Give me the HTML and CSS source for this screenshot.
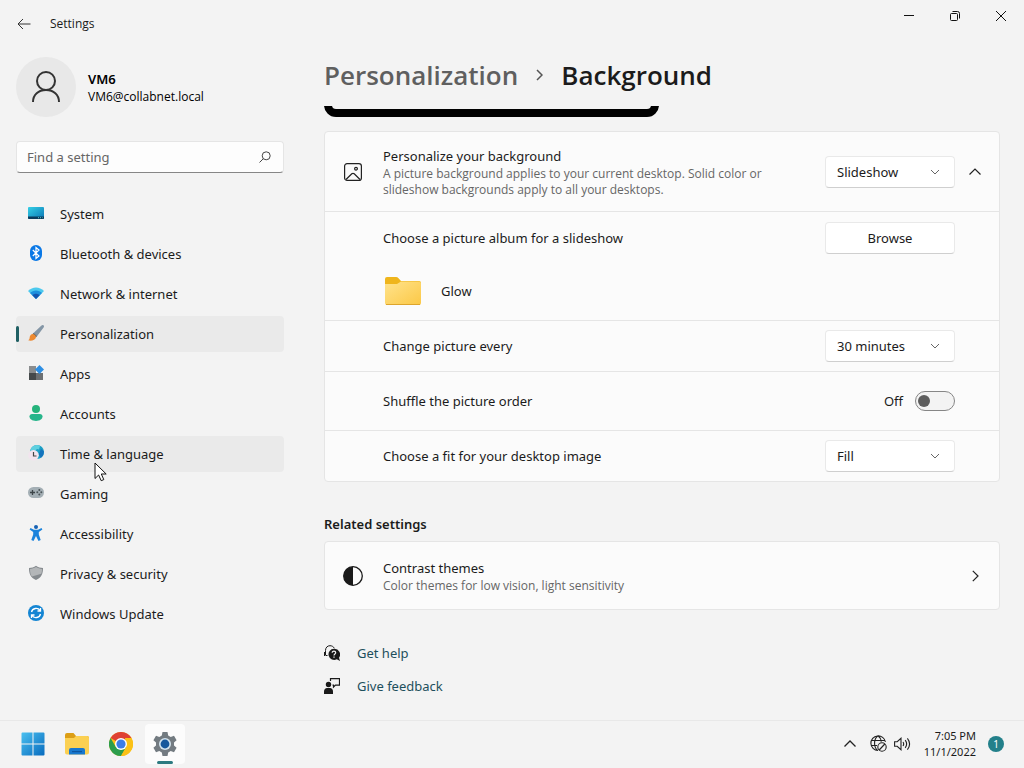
FILE: index.html
```html
<!DOCTYPE html>
<html lang="en">
<head>
  <meta charset="UTF-8">
  <meta name="viewport" content="width=device-width, initial-scale=1.0">
  <title>Settings</title>
  <link rel="stylesheet" href="styles.css">
</head>
<body>

  <header class="titlebar">
    <button class="back-btn" aria-label="Back">
      <svg width="14" height="12" viewBox="0 0 14 12" fill="none" stroke="#333"><path d="M13.500 6H1M6 1L1 6l5 5"/></svg>
    </button>
    <span class="window-title">Settings</span>
    <div class="window-controls">
      <button aria-label="Minimize"><svg width="10" height="10" fill="none" stroke="#111"><path d="M0 4.500h10"/></svg></button>
      <button aria-label="Restore"><svg width="10" height="10" fill="none" stroke="#111"><rect x=".5" y="2.500" width="7" height="7" rx="1"/><path d="M2.500 .5H7.500a2 2 0 0 1 2 2V7.500"/></svg></button>
      <button aria-label="Close"><svg width="10" height="10" fill="none" stroke="#111"><path d="M0 0l10 10M10 0L0 10"/></svg></button>
    </div>
  </header>

  <div class="layout">
    <aside class="sidebar">
      <div class="profile">
        <div class="avatar">
          <svg width="28" height="32" viewBox="0 0 28 32" fill="none" stroke="#333" stroke-width="2"><circle cx="14" cy="10" r="9"/><path d="M1 31c0-7.500 5.500-12 13-12s13 4.500 13 12"/></svg>
        </div>
        <div>
          <div class="profile-name">VM6</div>
          <div class="profile-mail">VM6@collabnet.local</div>
        </div>
      </div>

      <div class="search-box">
        <input type="text" id="search" placeholder="Find a setting" aria-label="Find a setting">
        <svg width="12" height="12" viewBox="0 0 12 12" fill="none" stroke="#444"><circle cx="7.200" cy="4.800" r="4"/><path d="M4.300 7.700L.5 11.500"/></svg>
      </div>

      <nav class="nav">
        <a href="#" class="nav-item">
          <svg width="16" height="16" viewBox="0 0 16 16"><defs><linearGradient id="sys" x2="1" y2="1"><stop stop-color="#35d0e6"/><stop offset="1" stop-color="#0a75b5"/></linearGradient></defs><rect y="2" width="16" height="12" rx="1" fill="url(#sys)"/><path d="M0 11.500h16V13a1 1 0 0 1-1 1H1a1 1 0 0 1-1-1z" fill="#0b3a5c"/><path d="M10 12.700h1m1 0h1m1 0h.6" stroke="#5cc"/></svg>
          System
        </a>
        <a href="#" class="nav-item">
          <svg width="16" height="16" viewBox="0 0 16 16"><rect x="2" width="12" height="16" rx="6" fill="#0a78e6"/><path d="M4.800 5l6.200 6L8 13.500v-11L11 5l-6.200 6" fill="none" stroke="#fff" stroke-width="1.200"/></svg>
          Bluetooth &amp; devices
        </a>
        <a href="#" class="nav-item">
          <svg width="16" height="16" viewBox="0 0 16 16"><path d="M0 6c4.400-4.700 11.600-4.700 16 0L8 14z" fill="#4cc9ee"/><path d="M2 8c3.200-3.500 8.800-3.500 12 0l-6 6z" fill="#1e90dd"/><path d="M4.400 10.300c2-2 5.200-2 7.200 0L8 14z" fill="#1455ae"/></svg>
          Network &amp; internet
        </a>
        <a href="#" class="nav-item active">
          <svg width="16" height="16" viewBox="0 0 16 16"><path d="M15.600.4c.8.8.3 1.600-.2 2.400L9.200 11 5.800 7.800l7.400-7c.8-.6 1.700-1 2.400-.4z" fill="#8496a6"/><path d="M5.800 7.800L9.200 11l-1.400 1.500-3.400-3.300z" fill="#5b6268"/><path d="M4.600 8.900c1.600-.2 3.600 1.600 3.300 3.300C7.500 15 3.500 16.300.2 15.300c1.800-1 1.200-2.300 1.700-4C2.400 9.900 3.300 9 4.600 8.900z" fill="#ed8a32"/></svg>
          Personalization
        </a>
        <a href="#" class="nav-item">
          <svg width="16" height="16" viewBox="0 0 16 16"><path d="M1 1h7v7H1z" fill="#8a8d8f"/><path d="M1 8h7v7H1z" fill="#45494b"/><path d="M8 8h7v7H8z" fill="#6c7073"/><path d="M11.500 0L16 4.500 11.500 9 7 4.500z" fill="#2d8fe4"/></svg>
          Apps
        </a>
        <a href="#" class="nav-item">
          <svg width="16" height="16" viewBox="0 0 16 16"><circle cx="8" cy="4" r="4" fill="#25b37b"/><path d="M4 9h8c1.500 0 2.500 1 2.500 2.300C14.500 14 12 16 8 16s-6.500-2-6.500-4.700C1.500 10 2.500 9 4 9z" fill="#27b58b"/></svg>
          Accounts
        </a>
        <a href="#" class="nav-item hover">
          <svg width="16" height="16" viewBox="0 0 16 16"><circle cx="9" cy="7" r="7" fill="#1b9fc4"/><path d="M6 .8C3.500 2 2.500 4 2.500 6l4 .5L9 4l2 .5L12 1C10-.3 8-.2 6 .8z" fill="#5fd0df"/><path d="M13 4l2.800 2c.4 3-1 5.500-3 7l-2-4z" fill="#1573bd"/><circle cx="5.500" cy="10.200" r="5.300" fill="#f2e4ee"/><path d="M5.500 7v4h3" fill="none" stroke="#444" stroke-width="1.200"/></svg>
          Time &amp; language
        </a>
        <a href="#" class="nav-item">
          <svg width="16" height="16" viewBox="0 0 16 16"><rect y="2" width="16" height="11" rx="5.500" fill="#a4afb5"/><path d="M2 7.500h5M4.500 5v5" stroke="#3d4549" stroke-width="1.300"/><g fill="#4b5458"><circle cx="11.300" cy="5" r="1"/><circle cx="11.300" cy="9.500" r="1"/><circle cx="9.300" cy="7.300" r="1"/><circle cx="13.300" cy="7.300" r="1"/></g></svg>
          Gaming
        </a>
        <a href="#" class="nav-item">
          <svg width="16" height="16" viewBox="0 0 16 16"><circle cx="8" cy="2" r="2" fill="#1762b4"/><path d="M2.500 3l3.500 1.800h4L13.500 3l.9 1.500L10.800 7v2.500l1.900 5.500-2.200.9L8 11l-2.500 4.900-2.200-.9 1.900-5.500V7L1.600 4.500z" fill="#1b83dc"/></svg>
          Accessibility
        </a>
        <a href="#" class="nav-item">
          <svg width="16" height="16" viewBox="0 0 16 16"><path d="M8 .8C10 2.300 12.500 3 15 3c0 6-1.500 9.500-7 12C2.500 12.500 1 9 1 3c2.500 0 5-.7 7-2.200z" fill="#858a8e"/><path d="M8 2c1.800 1.200 3.800 1.800 6 2 0 2-.2 3.500-.7 4.700L4 11.600C2.600 9.800 2 7.500 2 4c2.200-.2 4.200-.8 6-2z" fill="#b3b6b8"/></svg>
          Privacy &amp; security
        </a>
        <a href="#" class="nav-item">
          <svg width="16" height="16" viewBox="0 0 16 16"><circle cx="8" cy="8" r="8" fill="#1485d3"/><path d="M3.500 7c.8-4 6.500-4.800 8.500-1.500M12.500 3v3h-3M12.500 9c-.8 4-6.500 4.800-8.500 1.500M3.500 13v-3h3" fill="none" stroke="#fff" stroke-width="1.300"/></svg>
          Windows Update
        </a>
      </nav>
    </aside>

    <main class="content">
      <h1 class="breadcrumb">
        <a href="#">Personalization</a>
        <svg width="7" height="12" viewBox="0 0 7 12" fill="none" stroke="#555" stroke-width="1.500"><path d="M1 1l5 5-5 5"/></svg>
        <span>Background</span>
      </h1>

      <div class="preview"><div class="preview-screen"></div></div>

      <section class="card">
        <div class="row row-head">
          <svg class="row-icon" width="18" height="18" viewBox="0 0 18 18" fill="none" stroke="#222" stroke-width="1.200"><rect x=".6" y=".6" width="16.800" height="16.800" rx="2.500"/><circle cx="12" cy="5.700" r="1.400"/><path d="M2 16.500l5.800-5.700q1.200-1 2.400 0l5.800 5.700"/></svg>
          <div class="row-text">
            <label for="bg-type">Personalize your background</label>
            <p>A picture background applies to your current desktop. Solid color or slideshow backgrounds apply to all your desktops.</p>
          </div>
          <div class="select">
            <select id="bg-type"><option>Picture</option><option>Solid color</option><option selected>Slideshow</option></select>
            <svg width="10" height="6" viewBox="0 0 10 6" fill="none" stroke="#666"><path d="M1 1l4 4 4-4"/></svg>
          </div>
          <button class="expand-btn" aria-label="Collapse">
            <svg width="12" height="7" viewBox="0 0 12 7" fill="none" stroke="#222" stroke-width="1.200"><path d="M.5 6.500L6 1l5.500 5.500"/></svg>
          </button>
        </div>

        <div class="row-album">
          <div class="row">
            <span class="row-text">Choose a picture album for a slideshow</span>
            <button class="btn">Browse</button>
          </div>
          <div class="album">
            <svg width="36" height="28" viewBox="0 0 36 28"><defs><linearGradient id="fold" x2="1" y2="1"><stop stop-color="#ffe38c"/><stop offset="1" stop-color="#fbc846"/></linearGradient></defs><path d="M0 2a2 2 0 0 1 2-2h9q1.500 0 2.500 1.200L16 4h18a2 2 0 0 1 2 2v10H0z" fill="#efb51c"/><path d="M0 7h12l4-2.500h18a2 2 0 0 1 2 2V26a2 2 0 0 1-2 2H2a2 2 0 0 1-2-2z" fill="url(#fold)"/><path d="M1 27.500h34" stroke="#dda52c"/></svg>
            <span>Glow</span>
          </div>
        </div>

        <div class="row">
          <label class="row-text" for="interval">Change picture every</label>
          <div class="select">
            <select id="interval"><option>1 minute</option><option>10 minutes</option><option selected>30 minutes</option><option>1 hour</option></select>
            <svg width="10" height="6" viewBox="0 0 10 6" fill="none" stroke="#666"><path d="M1 1l4 4 4-4"/></svg>
          </div>
        </div>

        <div class="row row-toggle">
          <label class="row-text" for="shuffle">Shuffle the picture order</label>
          <span>Off</span>
          <input type="checkbox" id="shuffle" class="toggle">
        </div>

        <div class="row">
          <label class="row-text" for="fit">Choose a fit for your desktop image</label>
          <div class="select">
            <select id="fit"><option selected>Fill</option><option>Fit</option><option>Stretch</option><option>Tile</option><option>Center</option></select>
            <svg width="10" height="6" viewBox="0 0 10 6" fill="none" stroke="#666"><path d="M1 1l4 4 4-4"/></svg>
          </div>
        </div>
      </section>

      <h2>Related settings</h2>
      <a href="#" class="card related">
        <svg class="row-icon" width="20" height="20" viewBox="0 0 20 20"><circle cx="10" cy="10" r="9.300" fill="none" stroke="#1a1a1a" stroke-width="1.300"/><path d="M10 .7a9.300 9.300 0 0 0 0 18.600z" fill="#1a1a1a"/></svg>
        <div class="row-text">
          <div>Contrast themes</div>
          <p>Color themes for low vision, light sensitivity</p>
        </div>
        <svg width="7" height="12" viewBox="0 0 7 12" fill="none" stroke="#222" stroke-width="1.200"><path d="M.8.800L6 6 .8 11.200"/></svg>
      </a>

      <div class="help-links">
        <a href="#">
          <svg width="16" height="16" viewBox="0 0 16 16"><path d="M1.500 10V5.500C1.500 2.500 3.500.7 6 .7c2 0 3.500 1 4.300 2.500M.5 7v4M1.500 10.500h2" fill="none" stroke="#1a1a1a"/><path d="M10 3.800a5.600 5.600 0 1 0 2.800 10.500L16 16l-1-3.300A5.600 5.600 0 0 0 10 3.800z" fill="#1a1a1a"/><path d="M8.200 7.800c0-2.300 3.500-2.200 3.500 0 0 1.200-1.700 1.300-1.700 2.700M10 11.500v1.200" fill="none" stroke="#f3f3f3" stroke-width="1.200"/></svg>
          Get help
        </a>
        <a href="#">
          <svg width="16" height="16" viewBox="0 0 16 16"><circle cx="4.500" cy="6.500" r="2.700" fill="#1a1a1a"/><path d="M0 16v-2.500C0 11.500 1.500 10 3 10h3c1.700 0 3 1.500 3 3.500V16z" fill="#1a1a1a"/><path d="M6.500 3V.6h9v6.500h-4L9.500 9V7.100H8.500" fill="none" stroke="#1a1a1a" stroke-width="1.200"/></svg>
          Give feedback
        </a>
      </div>
    </main>
  </div>

  <footer class="taskbar">
    <div class="apps">
      <button aria-label="Start"><svg width="24" height="24" viewBox="0 0 24 24"><defs><linearGradient id="win" x1="0" y1="0" x2="24" y2="24" gradientUnits="userSpaceOnUse"><stop stop-color="#4cc2f1"/><stop offset="1" stop-color="#0669bd"/></linearGradient></defs><path d="M1.500.5h10v11H.5v-10a1 1 0 0 1 1-1zM12.500.5h10a1 1 0 0 1 1 1v10h-11zM.5 12.500h11v11h-10a1 1 0 0 1-1-1zM12.500 12.500h11v10a1 1 0 0 1-1 1h-10z" fill="url(#win)"/></svg></button>
      <button aria-label="File Explorer"><svg width="24" height="24" viewBox="0 0 24 24"><path d="M0 3a2 2 0 0 1 2-2h6.500L11 4h11a2 2 0 0 1 2 2v6H0z" fill="#dc9e16"/><path d="M0 6h9l2-2h11a2 2 0 0 1 2 2v14.500a2 2 0 0 1-2 2H2a2 2 0 0 1-2-2z" fill="#fbd052"/><path d="M4 22.500V18a2 2 0 0 1 2-2h12a2 2 0 0 1 2 2v4.500z" fill="#1878ce"/><path d="M7 19h10v1.200H7z" fill="#0d559f"/></svg></button>
      <button aria-label="Chrome"><svg width="24" height="24" viewBox="0 0 24 24"><circle cx="12" cy="12" r="12" fill="#fbc116"/><path d="M12 12L1.600 6A12 12 0 0 1 22.400 6z" fill="#df4034"/><path d="M1.600 6A12 12 0 0 0 12 24l5.200-9L12 12 6.800 15z" fill="#2c9d4c"/><path d="M22.400 6A12 12 0 0 1 12 24l5.200-9L16 6z" fill="#fbc116"/><circle cx="12" cy="12" r="6" fill="#fff"/><circle cx="12" cy="12" r="4.600" fill="#3c7de6"/></svg></button>
      <button class="current" aria-label="Settings"><svg width="24" height="24" viewBox="0 0 24 24"><path d="M9.500 0h5l.7 3.500 2.500 1.400L21 3.700l2.600 4.500L21 10.500v3l2.600 2.300-2.600 4.500-3.300-1.200-2.500 1.400-.7 3.500h-5l-.7-3.500-2.500-1.400L3 20.300.4 15.800 3 13.500v-3L.4 8.200 3 3.700l3.300 1.200 2.500-1.400z" fill="#737b81"/><circle cx="12" cy="12" r="6" fill="#d4e4ee"/><circle cx="12" cy="12" r="4.400" fill="#17589c"/></svg></button>
    </div>
    <div class="tray">
      <svg width="12" height="7" viewBox="0 0 12 7" fill="none" stroke="#222" stroke-width="1.300"><path d="M.5 6.500L6 1l5.500 5.500"/></svg>
      <div class="tray-icons">
        <svg width="17" height="17" viewBox="0 0 17 17" fill="none" stroke="#222" stroke-width="1.100"><path d="M15.400 7A7.300 7.300 0 1 0 8 15.500M8 .8C3.500 4 3.500 12 7.500 15.500M8 .8c2 1.400 3 3.500 3.200 6M1.200 5.500h13.600M1.200 10.500H7"/><circle cx="12" cy="12" r="4.200"/><path d="M9.200 15l5.600-6"/></svg>
        <svg width="17" height="14" viewBox="0 0 17 14" fill="none" stroke="#222" stroke-width="1.100"><path d="M.6 4.700v4.600h2.600L7 12.700V1.300L3.200 4.700zM9 5q1.400 2 0 4M11.200 3.200q2.900 3.800 0 7.600M13.400 1.400q4.400 5.600 0 11.200"/></svg>
      </div>
      <div class="clock">
        <div>7:05 PM</div>
        <div>11/1/2022</div>
      </div>
      <span class="badge">1</span>
    </div>
  </footer>

  <svg class="cursor" width="13" height="20" viewBox="0 0 13 20"><path d="M1 1v15.500l3.600-3.500 2.600 5.700 2.600-1.100-2.500-5.600h4.900z" fill="#fff" stroke="#111"/></svg>

</body>
</html>
```
FILE: styles.css
```css
* {
  box-sizing: border-box;
}

body {
  font-family: "Noto Sans", "Open Sans", sans-serif;
  font-size: 13px;
  line-height: 20px;
  color: #1b1b1b;
  background-color: #f3f3f3;
  margin: 0;
  min-height: 100vh;
  display: flex;
  flex-direction: column;
}

svg {
  display: block;
  flex-shrink: 0;
}

a {
  color: inherit;
  text-decoration: none;
}

p {
  margin: 0;
}

button {
  font: inherit;
  color: inherit;
  background: none;
  border: none;
  padding: 0;
  display: flex;
  align-items: center;
  justify-content: center;
}

/* title bar */
.titlebar {
  display: flex;
  align-items: center;
  height: 48px;
}

.back-btn {
  width: 48px;
  height: 36px;
}

.window-title,
.profile-mail,
.row-text p {
  font-family: "Open Sans", sans-serif;
  font-size: 12px;
  line-height: 16px;
}

.window-title {
  margin-left: 2px;
}

.window-controls {
  display: flex;
  align-self: flex-start;
  margin-left: auto;
}

.window-controls button {
  width: 46px;
  height: 32px;
}

.layout {
  display: flex;
  flex: 1;
}

/* sidebar */
.sidebar {
  width: 300px;
  padding: 9px 16px 0;
  flex-shrink: 0;
}

.profile {
  display: flex;
  align-items: center;
  gap: 12px;
  margin-bottom: 24px;
}

.avatar {
  width: 60px;
  height: 60px;
  border-radius: 50%;
  background-color: #e8e8e8;
  display: flex;
  align-items: center;
  justify-content: center;
}

.profile-name {
  font-weight: 600;
  line-height: 20px;
  color: #000;
}

.profile-mail {
  color: #000;
}

.search-box {
  display: flex;
  align-items: center;
  height: 32px;
  padding-right: 12px;
  background-color: #fdfdfd;
  border: 1px solid #e5e5e5;
  border-bottom-color: #868686;
  border-radius: 4px;
}

.search-box input {
  flex: 1;
  min-width: 0;
  padding: 0 10px;
  font: inherit;
  background: none;
  border: none;
  outline: none;
}

.search-box input::placeholder {
  color: #666;
}

.nav {
  display: flex;
  flex-direction: column;
  gap: 4px;
  margin-top: 23px;
}

.nav-item {
  display: flex;
  align-items: center;
  gap: 16px;
  height: 36px;
  padding: 0 12px;
  border-radius: 4px;
}

.nav-item svg {
  margin-bottom: 2px;
}

.nav-item.active,
.nav-item.hover {
  background-color: #eaeaea;
}

.nav-item.active::before {
  content: "";
  width: 3px;
  height: 16px;
  margin: 0 -7px 0 -12px;
  border-radius: 2px;
  background-color: #1f5f63;
}

/* content */
.content {
  flex: 1;
  min-width: 0;
  padding: 7px 24px 0;
}

.breadcrumb {
  display: flex;
  align-items: center;
  gap: 18px;
  margin: 0;
  font-family: "Open Sans", sans-serif;
  font-size: 26px;
  font-weight: 600;
  line-height: 40px;
}

.breadcrumb a {
  color: #5f5f5f;
}

.preview {
  display: flex;
  align-items: flex-end;
  height: 11px;
  margin: 11px 0 14px;
  overflow: hidden;
}

.preview-screen {
  width: 335px;
  height: 188px;
  flex-shrink: 0;
  border: 8px solid #000;
  border-radius: 12px;
}

.card {
  display: block;
  background-color: #fbfbfb;
  border: 1px solid #e5e5e5;
  border-radius: 4px;
}

.row {
  display: flex;
  align-items: center;
  min-height: 51px;
  padding: 0 44px 0 58px;
}

.card > * + * {
  border-top: 1px solid #e5e5e5;
}

.row-text {
  flex: 1;
}

.row-text p {
  max-width: 400px;
  color: #666;
}

.row-icon {
  margin-right: 20px;
}

.row-head {
  min-height: 79px;
  padding: 0 8px 0 19px;
}

.row-head .row-icon {
  margin-right: 21px;
}

.row-head label {
  display: block;
}

.row-album {
  padding-bottom: 15px;
}

.album {
  display: flex;
  align-items: center;
  gap: 20px;
  padding: 14px 0 0 60px;
}

.row-toggle {
  min-height: 59px;
}

.btn,
.select select {
  width: 130px;
  height: 32px;
  background-color: #fff;
  border: 1px solid #e9e9e9;
  border-bottom-color: #cfcfcf;
  border-radius: 4px;
}

.select {
  display: grid;
  align-items: center;
}

.select > * {
  grid-area: 1 / 1;
}

.select select {
  appearance: none;
  padding: 0 11px;
  font: inherit;
  color: inherit;
}

.select svg {
  justify-self: end;
  margin-right: 15px;
  pointer-events: none;
}

.expand-btn {
  width: 32px;
  height: 32px;
  margin-left: 4px;
}

.toggle {
  appearance: none;
  display: flex;
  align-items: center;
  width: 40px;
  height: 20px;
  margin: 0 0 0 12px;
  padding: 0 2px;
  border: 1px solid #868686;
  border-radius: 10px;
  background-color: #f3f3f3;
}

.toggle::before {
  content: "";
  width: 12px;
  height: 12px;
  border-radius: 50%;
  background-color: #5d5d5d;
}

.toggle:checked {
  justify-content: flex-end;
}

h2 {
  margin: 32px 0 7px;
  font-size: 13px;
  font-weight: 600;
  line-height: 20px;
}

.related {
  display: flex;
  align-items: center;
  min-height: 69px;
  padding: 0 20px 0 18px;
}

.related > * + * {
  border: none;
}

.help-links {
  display: flex;
  flex-direction: column;
  align-items: flex-start;
  gap: 13px;
  margin-top: 33px;
  color: #1d4f5c;
}

.help-links a {
  display: flex;
  align-items: center;
  gap: 17px;
}

/* taskbar */
.taskbar {
  display: flex;
  align-items: center;
  justify-content: space-between;
  height: 48px;
  padding: 0 20px 2px 13px;
  border-top: 1px solid #e8e8e8;
}

.apps {
  display: flex;
  gap: 4px;
}

.apps button {
  width: 40px;
  height: 40px;
  border-radius: 4px;
}

.apps .current {
  background-color: #fcfcfc;
  position: relative;
}

.apps .current::after {
  content: "";
  position: absolute;
  bottom: 0;
  left: 12px;
  width: 16px;
  height: 3px;
  border-radius: 2px;
  background-color: #2c7a80;
}

.tray {
  display: flex;
  align-items: center;
  gap: 12px;
}

.tray-icons {
  display: flex;
  align-items: center;
  gap: 7px;
  margin-left: 2px;
}

.clock {
  width: 53px;
  font-size: 11px;
  line-height: 16px;
  text-align: right;
  white-space: nowrap;
}

.badge {
  width: 16px;
  height: 16px;
  border-radius: 50%;
  background-color: #23808a;
  color: #fff;
  font-size: 10px;
  line-height: 16px;
  text-align: center;
}

.cursor {
  position: absolute;
  left: 94px;
  top: 462px;
}
```
